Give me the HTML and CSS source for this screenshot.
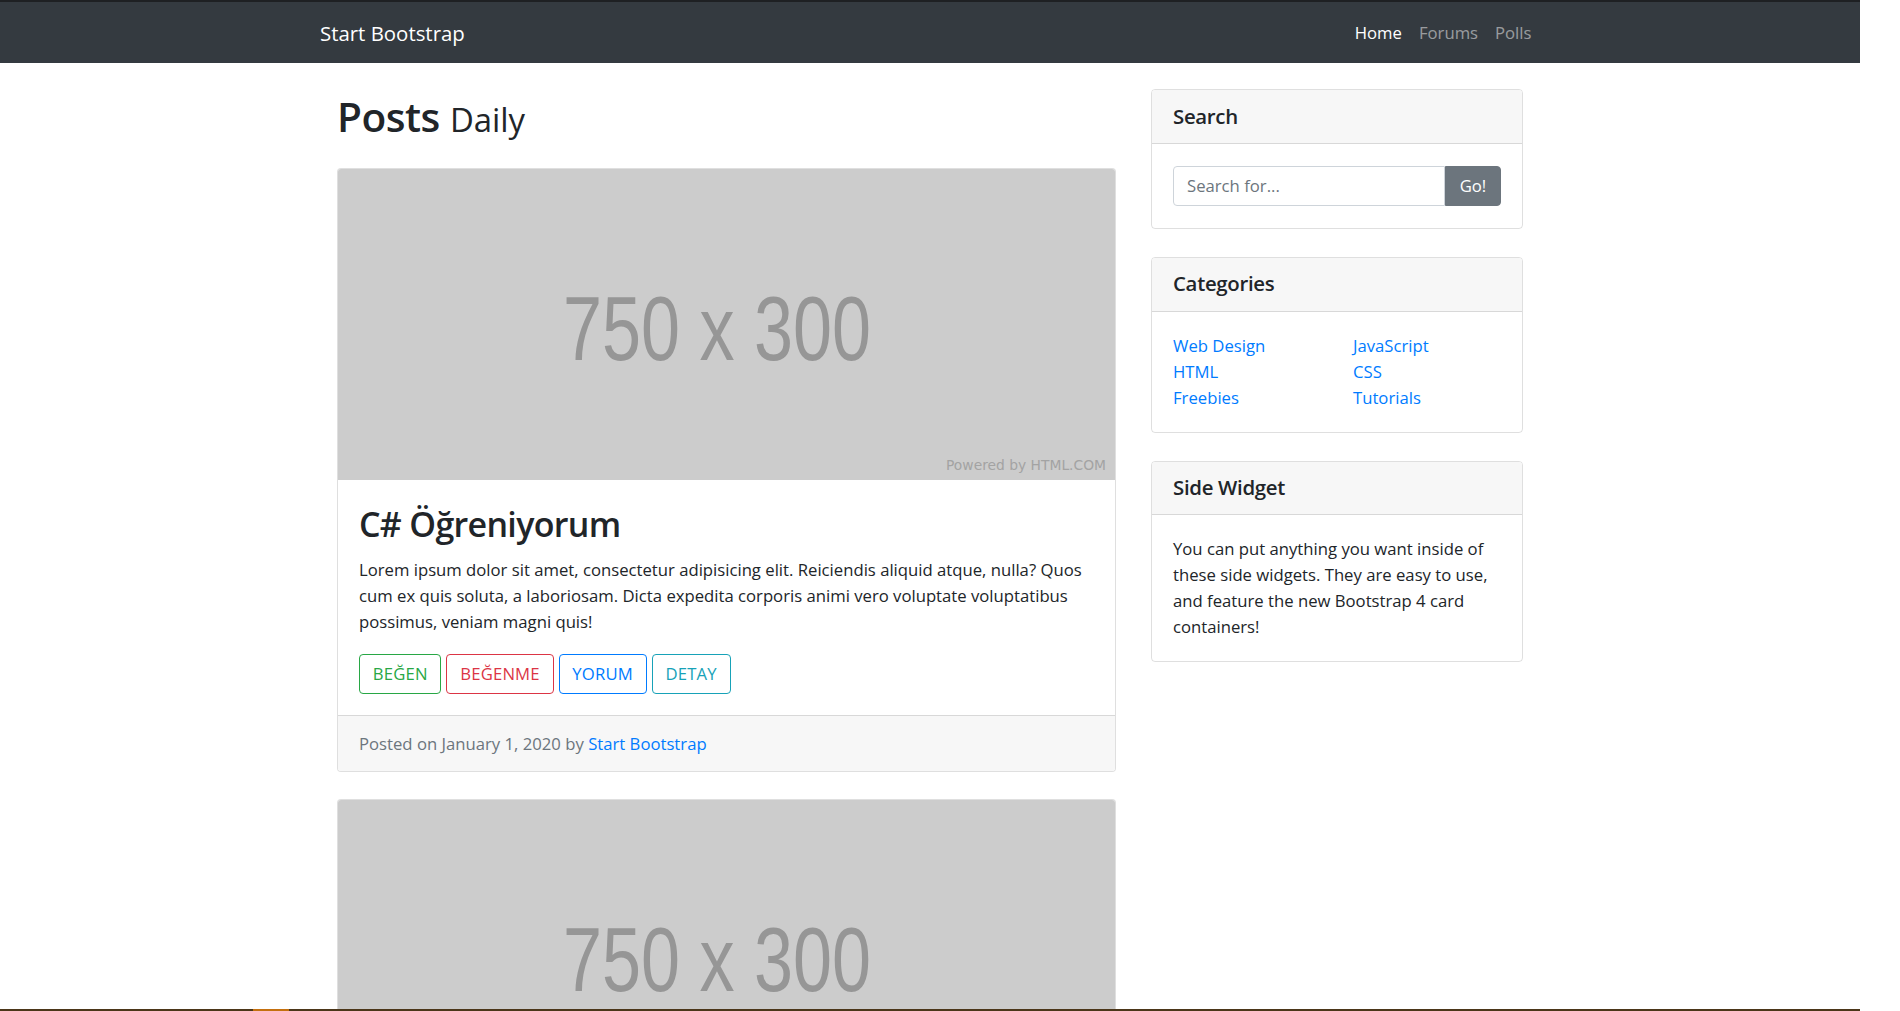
FILE: index.html
```html
<!DOCTYPE html>
<html lang="tr">
<head>
<meta charset="utf-8">
<title>Blog Home - Start Bootstrap</title>
<link rel="stylesheet" href="styles.css">
</head>
<body>
<div class="page">
  <nav class="navbar">
    <div class="nav-inner">
      <a class="brand" href="#">Start Bootstrap</a>
      <ul class="nav-links">
        <li><a class="nav-link active" href="#">Home</a></li>
        <li><a class="nav-link" href="#">Forums</a></li>
        <li><a class="nav-link" href="#">Polls</a></li>
      </ul>
    </div>
  </nav>

  <div class="container">
    <main class="main-col">
      <h1 class="page-title">Posts <small>Daily</small></h1>

      <article class="card">
        <svg class="placeholder" viewBox="0 0 777 311" xmlns="http://www.w3.org/2000/svg">
          <rect width="777" height="311" fill="#cccccc"/>
          <text class="ph-main" x="225" y="191" textLength="308" lengthAdjust="spacingAndGlyphs">750 x 300</text>
          <text class="ph-small" x="608" y="301" textLength="160" lengthAdjust="spacingAndGlyphs">Powered by HTML.COM</text>
        </svg>
        <div class="card-body">
          <h2 class="card-title">C# Öğreniyorum</h2>
          <p class="card-text">Lorem ipsum dolor sit amet, consectetur adipisicing elit. Reiciendis aliquid atque, nulla? Quos cum ex quis soluta, a laboriosam. Dicta expedita corporis animi vero voluptate voluptatibus possimus, veniam magni quis!</p>
          <div class="actions">
            <a href="#" class="btn btn-green">BEĞEN</a>
            <a href="#" class="btn btn-red">BEĞENME</a>
            <a href="#" class="btn btn-blue">YORUM</a>
            <a href="#" class="btn btn-teal">DETAY</a>
          </div>
        </div>
        <div class="card-footer">Posted on January 1, 2020 by <a href="#">Start Bootstrap</a></div>
      </article>

      <article class="card">
        <svg class="placeholder" viewBox="0 0 777 311" xmlns="http://www.w3.org/2000/svg">
          <rect width="777" height="311" fill="#cccccc"/>
          <text class="ph-main" x="225" y="191" textLength="308" lengthAdjust="spacingAndGlyphs">750 x 300</text>
          <text class="ph-small" x="608" y="301" textLength="160" lengthAdjust="spacingAndGlyphs">Powered by HTML.COM</text>
        </svg>
        <div class="card-body">
          <h2 class="card-title">Post Title</h2>
          <p class="card-text">Lorem ipsum dolor sit amet, consectetur adipisicing elit. Reiciendis aliquid atque, nulla? Quos cum ex quis soluta, a laboriosam.</p>
        </div>
        <div class="card-footer">Posted on January 1, 2020 by <a href="#">Start Bootstrap</a></div>
      </article>
    </main>

    <aside class="sidebar">
      <section class="widget">
        <h5 class="widget-header">Search</h5>
        <div class="widget-body search-body">
          <div class="input-group">
            <input class="search-input" type="text" placeholder="Search for...">
            <button class="go-btn" type="button">Go!</button>
          </div>
        </div>
      </section>

      <section class="widget">
        <h5 class="widget-header">Categories</h5>
        <div class="widget-body">
          <div class="cat-grid">
            <ul class="cat-list">
              <li><a href="#">Web Design</a></li>
              <li><a href="#">HTML</a></li>
              <li><a href="#">Freebies</a></li>
            </ul>
            <ul class="cat-list">
              <li><a href="#">JavaScript</a></li>
              <li><a href="#">CSS</a></li>
              <li><a href="#">Tutorials</a></li>
            </ul>
          </div>
        </div>
      </section>

      <section class="widget">
        <h5 class="widget-header">Side Widget</h5>
        <div class="widget-body">
          <p class="widget-text">You can put anything you want inside of these side widgets. They are easy to use, and feature the new Bootstrap 4 card containers!</p>
        </div>
      </section>
    </aside>
  </div>
</div>
<div class="taskbar"><span class="taskbar-app"></span></div>
</body>
</html>
```
FILE: styles.css
```css
html {
  overflow: hidden;
}

body {
  margin: 0;
  background: #fff;
  color: #212529;
  font-family: "Open Sans", "Noto Sans", sans-serif;
  font-size: 16.7px;
  line-height: 26px;
}

a {
  color: #007bff;
  text-decoration: none;
}

.page {
  width: 1860px;
}

/* Navbar */
.navbar {
  box-sizing: border-box;
  height: 63px;
  border-top: 2px solid #1e2023;
  background: #343a40;
  display: flex;
  align-items: center;
}

.nav-inner {
  width: 1220px;
  margin: 0 auto;
  display: flex;
  justify-content: space-between;
  align-items: center;
}

.brand {
  color: #fff;
  font-size: 20.4px;
  line-height: 30px;
}

.nav-links {
  display: flex;
  list-style: none;
  margin: 0;
  padding: 0;
}

.nav-link {
  display: block;
  padding: 8px 8.5px;
  color: rgba(255, 255, 255, 0.5);
  line-height: 25.6px;
}

.nav-link.active {
  color: #fff;
}

/* Layout */
.container {
  width: 1186px;
  margin: 0 auto;
  display: grid;
  grid-template-columns: 779px 372px;
  column-gap: 35px;
  align-items: start;
}

.page-title {
  margin: 29px 0 24px;
  font-size: 40.6px;
  font-weight: 600;
  letter-spacing: -0.012em;
  line-height: 49px;
}

.page-title small {
  font-size: 81%;
  font-weight: 400;
  letter-spacing: 0;
}

/* Cards */
.card {
  border: 1px solid rgba(0, 0, 0, 0.125);
  border-radius: 4px;
  overflow: hidden;
  background: #fff;
  margin-bottom: 27px;
}

.placeholder {
  display: block;
  width: 777px;
  height: 311px;
}

.ph-main {
  font-family: "Liberation Sans", Arial, sans-serif;
  font-size: 90px;
  fill: #969696;
}

.ph-small {
  font-family: "DejaVu Sans", sans-serif;
  font-size: 13.5px;
  fill: #a3a3a3;
}

.card-body {
  padding: 21px;
}

.card-title {
  margin: 3px 0 12px;
  font-size: 34px;
  font-weight: 600;
  letter-spacing: -0.02em;
  line-height: 40.8px;
}

.card-text {
  margin: 0 0 19px;
}

.actions {
  display: flex;
  gap: 5px;
}

.btn {
  display: inline-block;
  padding: 6.4px 12.8px;
  border: 1px solid;
  border-radius: 4px;
  line-height: 25.6px;
  letter-spacing: 0.01em;
}

.btn-green { color: #28a745; border-color: #28a745; }
.btn-red { color: #dc3545; border-color: #dc3545; }
.btn-blue { color: #007bff; border-color: #007bff; }
.btn-teal { color: #17a2b8; border-color: #17a2b8; }

.card-footer {
  padding: 14.5px 21px;
  background: #f7f7f7;
  border-top: 1px solid rgba(0, 0, 0, 0.125);
  color: #6c757d;
}

/* Sidebar */
.sidebar {
  margin-top: 26px;
}

.widget {
  border: 1px solid rgba(0, 0, 0, 0.125);
  border-radius: 4px;
  margin-bottom: 28px;
  overflow: hidden;
}

.widget-header {
  margin: 0;
  padding: 13.5px 21px;
  background: #f7f7f7;
  border-bottom: 1px solid rgba(0, 0, 0, 0.125);
  font-size: 20.4px;
  font-weight: 600;
  letter-spacing: -0.015em;
  line-height: 25.6px;
}

.widget-body {
  padding: 21px;
}

.search-body {
  padding: 22px 21px;
}

.input-group {
  display: flex;
}

.search-input {
  flex: 1;
  min-width: 0;
  box-sizing: border-box;
  height: 40.4px;
  margin: 0;
  padding: 6.4px 13px;
  border: 1px solid #ced4da;
  border-radius: 4px 0 0 4px;
  font-family: inherit;
  font-size: 16.7px;
  color: #495057;
  outline: none;
}

.search-input::placeholder {
  color: #6c757d;
}

.go-btn {
  box-sizing: border-box;
  width: 56px;
  height: 40.4px;
  margin: 0;
  padding: 0;
  border: 1px solid #6c757d;
  border-radius: 0 4px 4px 0;
  background: #6c757d;
  color: #fff;
  font-family: inherit;
  font-size: 16.7px;
}

.cat-grid {
  display: grid;
  grid-template-columns: 180px 1fr;
}

.cat-list {
  list-style: none;
  margin: 0;
  padding: 0;
}

.widget-text {
  margin: 0;
}

/* Taskbar strip at the bottom edge */
.taskbar {
  position: fixed;
  left: 0;
  bottom: 0;
  width: 1860px;
  height: 2px;
  background: #4b3619;
}

.taskbar-app {
  position: absolute;
  left: 253px;
  top: 0;
  width: 36px;
  height: 100%;
  background: #c4700f;
}
```
